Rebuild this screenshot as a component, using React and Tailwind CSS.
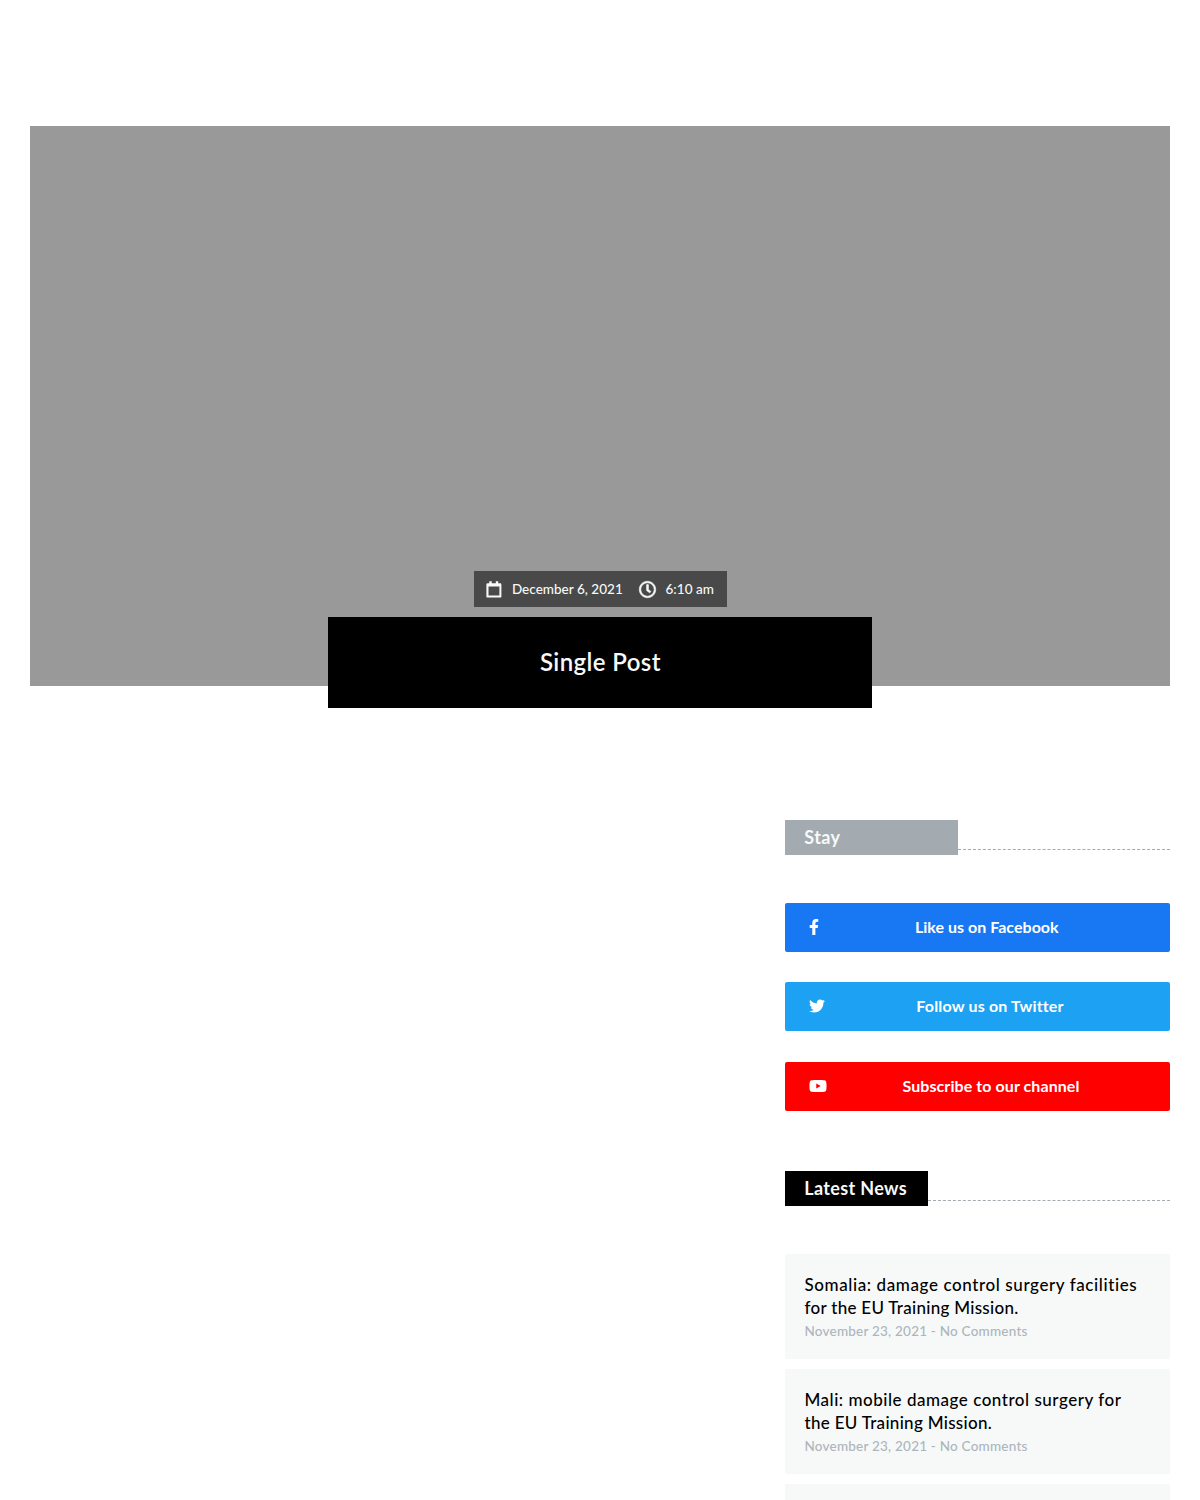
import { FaFacebookF, FaTwitter, FaYoutube, FaRegClock } from "react-icons/fa";

const posts = [
  {
    lines: [
      { text: "Somalia: damage control surgery facilities", cls: "tracking-[0.6px]" },
      { text: "for the EU Training Mission.", cls: "tracking-[0.29px]" },
    ],
  },
  {
    lines: [
      { text: "Mali: mobile damage control surgery for", cls: "tracking-[0.52px]" },
      { text: "the EU Training Mission.", cls: "tracking-[0.3px]" },
    ],
  },
];

function CalendarIcon() {
  return (
    <svg viewBox="0 0 16 17" className="h-[17px] w-4 shrink-0" fill="currentColor">
      <path
        fillRule="evenodd"
        d="M3.3 0.3h2.4v2h4.1v-2h2.4v2h1.9q1.3 0 1.3 1.3v11.8q0 1.2-1.2 1.2H1.6q-1.2 0-1.2-1.2V3.6q0-1.3 1.3-1.3h1.6zM2.5 5.6v9h10.9v-9z"
      />
    </svg>
  );
}

function SocialButton({ icon, label, color, text }) {
  return (
    <a className={`flex h-[49px] items-center rounded-[2px] pb-px pl-[24.4px] text-white ${color}`}>
      {icon}
      <span className={`grow text-center text-base leading-none font-bold whitespace-nowrap ${text}`}>{label}</span>
    </a>
  );
}

function SectionHeading({ children, box }) {
  return (
    <div className="flex h-[35px]">
      <h2 className={`h-[35px] pl-[19.5px] text-[18px] leading-[35px] font-bold whitespace-nowrap text-[#f7f9f8] ${box}`}>
        {children}
      </h2>
      <div className="mt-[29px] h-px grow border-t border-dashed border-[#a3abb0]" />
    </div>
  );
}

export default function App() {
  return (
    <div className="h-[1500px] overflow-hidden bg-white px-[30.4px] pt-[126px] font-[Lato,sans-serif]">
      <header className="flex h-[560px] w-[1140px] flex-col items-center bg-[#999999] pt-[445px]">
        <div className="flex h-[36px] w-[253px] shrink-0 items-center bg-[#494949] pl-3 text-[#f7f9f8]">
          <CalendarIcon />
          <span className="ml-[10px] w-[111px] text-[13.5px] font-medium tracking-[0.03px] whitespace-nowrap">December 6, 2021</span>
          <FaRegClock className="ml-[16px] size-[17px] shrink-0 overflow-visible" stroke="currentColor" strokeWidth={18} />
          <span className="ml-[9.6px] text-[13.5px] font-medium tracking-[0.03px] whitespace-nowrap">6:10 am</span>
        </div>
        <div className="mt-[10px] flex h-[91px] w-[544px] shrink-0 items-center justify-center bg-black pb-0.5">
          <h1 className="text-[24px] font-semibold tracking-[0.4px] text-[#f7f9f8]">Single Post</h1>
        </div>
      </header>

      <aside className="mt-[134px] ml-[754.4px] w-[385.6px]">
        <SectionHeading box="w-[173px] bg-[#a3abb0] tracking-[0.4px]">Stay</SectionHeading>
        <div className="mt-[48px] flex flex-col gap-[30.4px]">
          <SocialButton icon={<FaFacebookF className="h-4 w-[10px] shrink-0" />} label="Like us on Facebook" color="bg-[#1877f2] pr-[16px]" text="tracking-[0.03px]" />
          <SocialButton icon={<FaTwitter className="size-4 shrink-0" />} label="Follow us on Twitter" color="bg-[#1da1f2] pr-[15.5px]" text="tracking-[0.17px]" />
          <SocialButton icon={<FaYoutube className="h-4 w-[18px] shrink-0" />} label="Subscribe to our channel" color="bg-[#ff0000] pr-[15.5px]" text="tracking-[0.08px]" />
        </div>
        <div className="mt-[60.5px]">
          <SectionHeading box="w-[143.5px] bg-black tracking-[0.35px]">Latest News</SectionHeading>
        </div>
        <div className="mt-[48px] flex flex-col gap-[10px]">
          {posts.map((post) => (
            <article key={post.lines[0].text} className="h-[105px] bg-[#f7f9f8] px-[19.7px] pt-[20px]">
              <h3 className="text-[17px] leading-[22.4px] font-medium text-black">
                {post.lines.map((line) => (
                  <span key={line.text} className={`block whitespace-nowrap ${line.cls}`}>{line.text}</span>
                ))}
              </h3>
              <p className="mt-[2.4px] text-[13.5px] leading-5 font-medium tracking-[0.22px] text-[#adb5bd]">November 23, 2021 - No Comments</p>
            </article>
          ))}
          <article className="h-[105px] bg-[#f7f9f8]" />
        </div>
      </aside>
    </div>
  );
}
